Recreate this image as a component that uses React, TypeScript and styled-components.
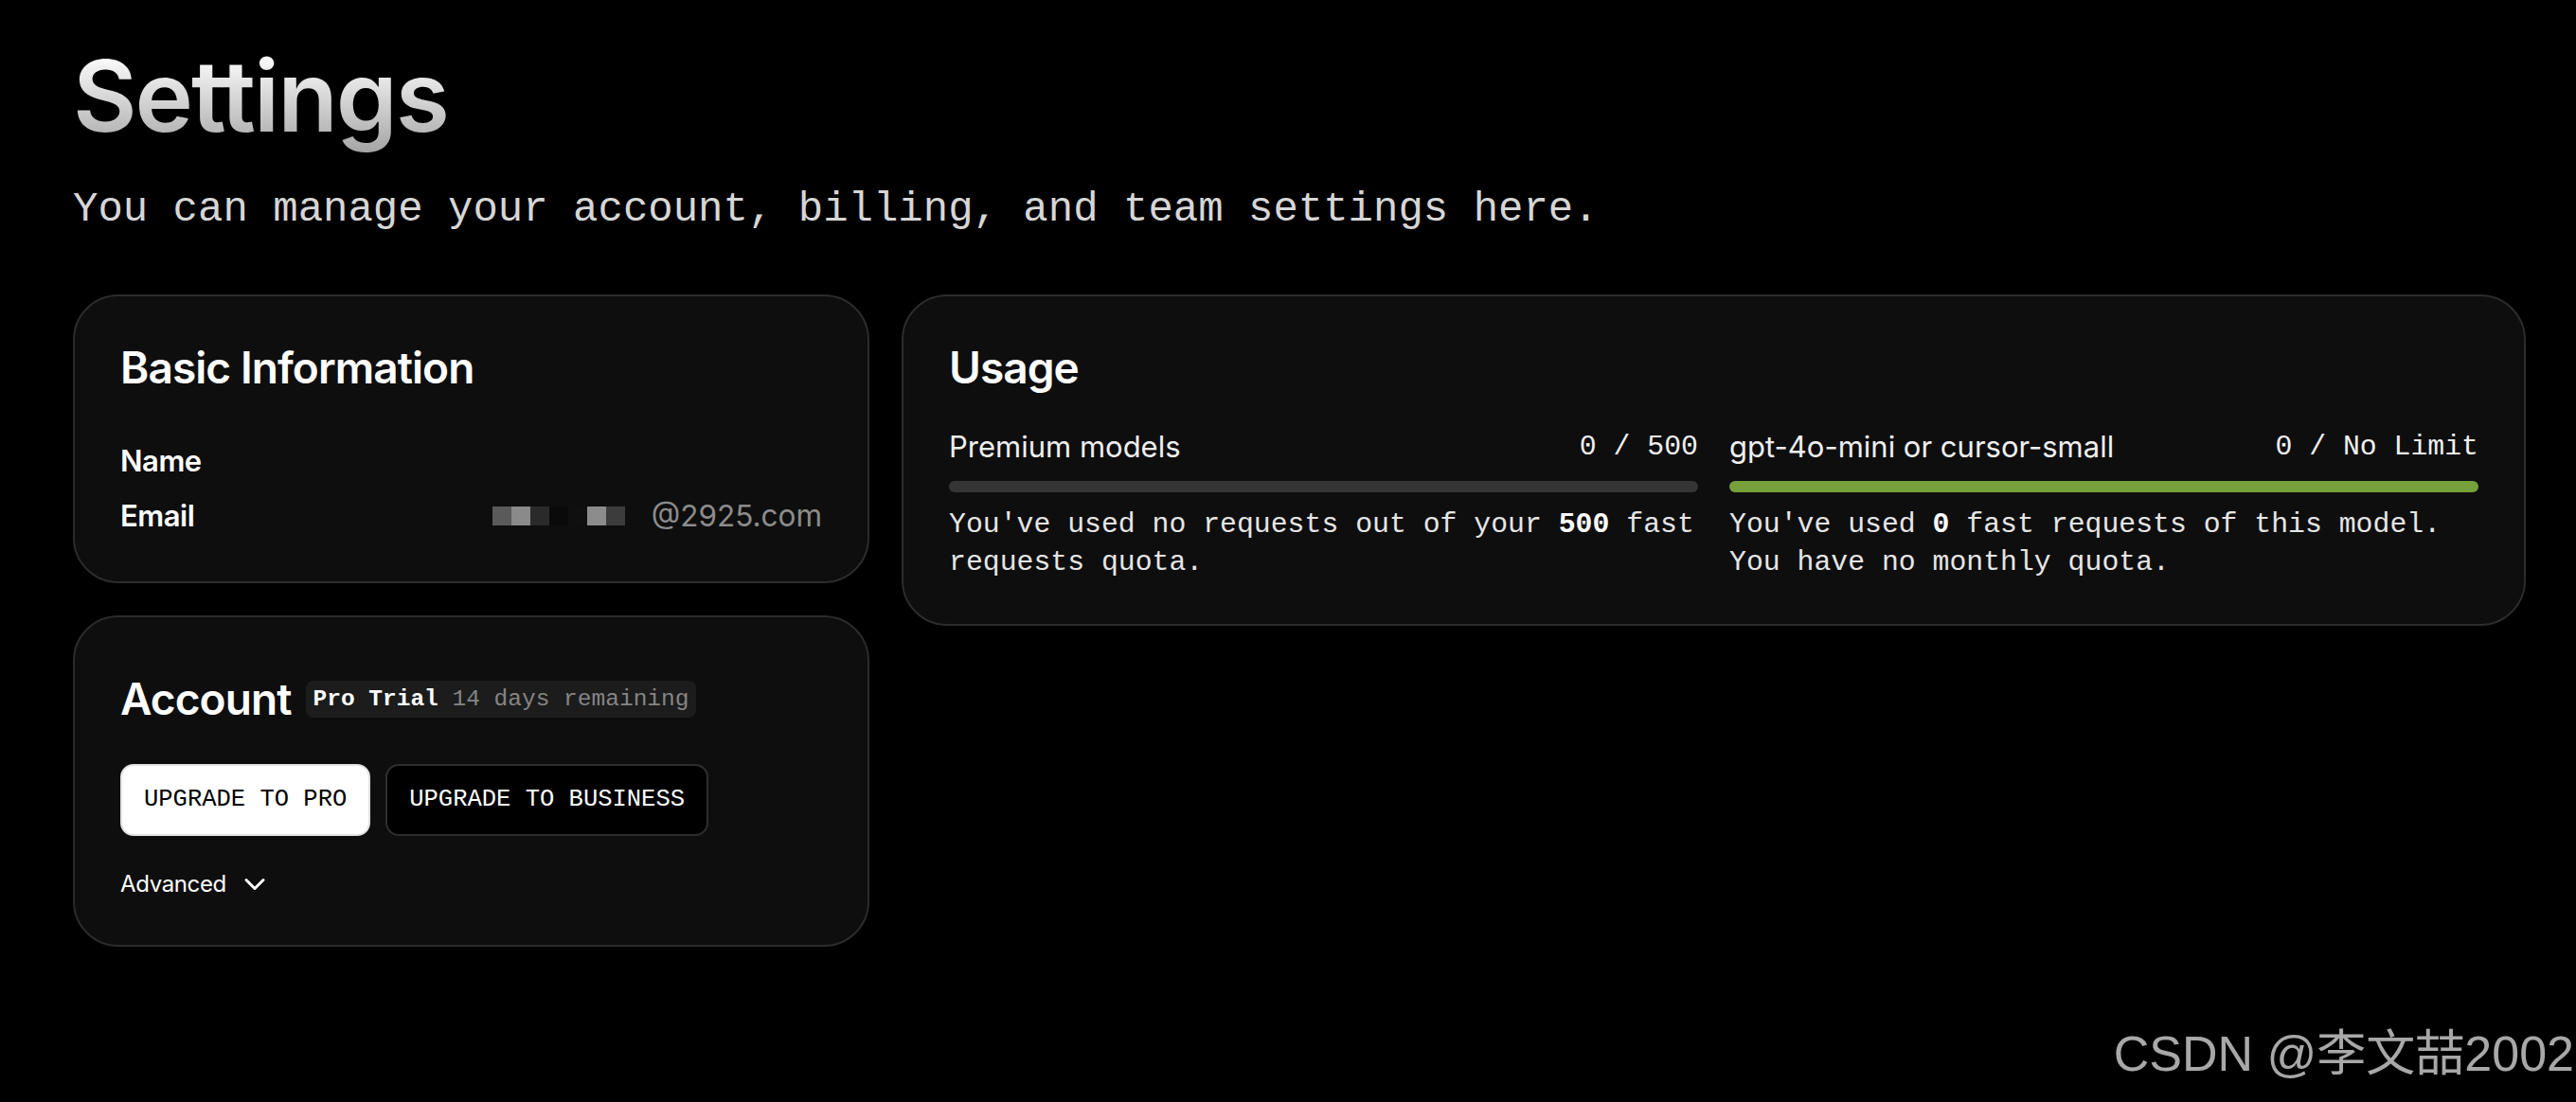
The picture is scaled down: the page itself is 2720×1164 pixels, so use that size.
import styled, { createGlobalStyle } from "styled-components";
import { ChevronDown } from "lucide-react";

const GlobalStyle = createGlobalStyle`
  html, body {
    margin: 0;
    padding: 0;
    background: #000;
  }
  * {
    box-sizing: border-box;
  }
`;

const sans = `Inter, "Noto Sans", "Liberation Sans", sans-serif`;
const mono = `"Liberation Mono", "DejaVu Sans Mono", monospace`;

const usage = [
  {
    label: "Premium models",
    count: "0 / 500",
    fill: "#353535",
    text: (
      <>
        You've used no requests out of your <b>500</b> fast requests quota.
      </>
    ),
  },
  {
    label: "gpt-4o-mini or cursor-small",
    count: "0 / No Limit",
    fill: "#75a03a",
    text: (
      <>
        You've used <b>0</b> fast requests of this model. You have no monthly
        quota.
      </>
    ),
  },
];

// blurred-out part of the email address
const mosaic = ["#5a5a5a", "#8a8a8a", "#2a2a2a", "#0a0a0a", "#0f0f0f", "#8c8c8c", "#3c3c3c"];

const App = () => {
  return (
    <>
      <GlobalStyle />
      <Page>
        <Title>Settings</Title>
        <Subtitle>You can manage your account, billing, and team settings here.</Subtitle>

        <Grid>
          <Column>
            <Card>
              <CardTitle>Basic Information</CardTitle>
              <InfoList>
                <InfoRow>
                  <InfoLabel>Name</InfoLabel>
                </InfoRow>
                <InfoRow>
                  <InfoLabel>Email</InfoLabel>
                  <EmailValue>
                    <Mosaic>
                      {mosaic.map((c, i) => (
                        <Pixel key={i} $color={c} />
                      ))}
                    </Mosaic>
                    @2925.com
                  </EmailValue>
                </InfoRow>
              </InfoList>
            </Card>

            <Card>
              <AccountHeader>
                <CardTitle>Account</CardTitle>
                <Badge>
                  <strong>Pro Trial</strong>
                  <span>14 days remaining</span>
                </Badge>
              </AccountHeader>
              <ButtonRow>
                <UpgradeButton $primary>UPGRADE TO PRO</UpgradeButton>
                <UpgradeButton>UPGRADE TO BUSINESS</UpgradeButton>
              </ButtonRow>
              <AdvancedToggle>
                Advanced
                <ChevronDown size={36} strokeWidth={2} />
              </AdvancedToggle>
            </Card>
          </Column>

          <Column>
            <UsageCard>
              <CardTitle>Usage</CardTitle>
              <UsageGrid>
                {usage.map((u) => (
                  <UsageItem key={u.label}>
                    <UsageHead>
                      <UsageLabel>{u.label}</UsageLabel>
                      <UsageCount>{u.count}</UsageCount>
                    </UsageHead>
                    <Bar $color={u.fill} />
                    <UsageText>{u.text}</UsageText>
                  </UsageItem>
                ))}
              </UsageGrid>
            </UsageCard>
          </Column>
        </Grid>

        <Watermark>CSDN @李文喆2002</Watermark>
      </Page>
    </>
  );
};

export default App;

const Page = styled.div`
  position: relative;
  min-height: 100vh;
  padding: 36px 53px 0 77px;
  background: #000;
  color: #fff;
  font-family: ${sans};
`;

const Title = styled.h1`
  margin: 0;
  display: inline-block;
  font-size: 104px;
  line-height: 1.25;
  font-weight: 600;
  letter-spacing: -0.02em;
  background: linear-gradient(180deg, #ffffff 15%, #a6a6a6 95%);
  -webkit-background-clip: text;
  background-clip: text;
  color: transparent;
`;

const Subtitle = styled.p`
  margin: 29px 0 0;
  font-family: ${mono};
  font-size: 44px;
  line-height: 1.2;
  color: #d6d6d6;
`;

const Grid = styled.div`
  display: grid;
  grid-template-columns: 841px 1715px;
  gap: 34px;
  margin-top: 63px;
  align-items: start;
`;

const Column = styled.div`
  display: flex;
  flex-direction: column;
  gap: 34px;
`;

const Card = styled.section`
  background: #0e0e0e;
  border: 2px solid #2c2c2c;
  border-radius: 48px;
  padding: 48px;
`;

const UsageCard = styled(Card)`
  padding-bottom: 45px;
`;

const CardTitle = styled.h2`
  margin: 0;
  font-size: 46px;
  line-height: 1.2;
  font-weight: 600;
  letter-spacing: -0.02em;
  color: #fff;
`;

const InfoList = styled.div`
  display: flex;
  flex-direction: column;
  gap: 16px;
  margin-top: 50px;
`;

const InfoRow = styled.div`
  display: flex;
  align-items: center;
  justify-content: space-between;
  height: 42px;
`;

const InfoLabel = styled.span`
  font-size: 31px;
  font-weight: 600;
  letter-spacing: -0.015em;
`;

const EmailValue = styled.span`
  display: flex;
  align-items: center;
  gap: 28px;
  font-size: 31.5px;
  color: #8c8c8c;
`;

const Mosaic = styled.span`
  display: flex;
`;

const Pixel = styled.span<{ $color: string }>`
  width: 20px;
  height: 20px;
  background: ${(p) => p.$color};
`;

const AccountHeader = styled.div`
  display: flex;
  align-items: center;
  gap: 16px;
  height: 77px;
`;

const Badge = styled.span`
  display: inline-flex;
  align-items: center;
  gap: 14.7px;
  height: 39px;
  padding: 0 8px 0 7px;
  border-radius: 8px;
  background: #1c1c1c;
  font-family: ${mono};
  font-size: 24.5px;
  white-space: pre;

  strong {
    color: #fff;
    font-weight: 700;
  }

  span {
    color: #858585;
  }
`;

const ButtonRow = styled.div`
  display: flex;
  gap: 16px;
  margin-top: 30px;
`;

const UpgradeButton = styled.button<{ $primary?: boolean }>`
  height: 76px;
  padding: 0 23px;
  border-radius: 14px;
  border: 2px solid ${(p) => (p.$primary ? "#e2e2e2" : "#2e2e2e")};
  background: ${(p) => (p.$primary ? "#fff" : "#000")};
  color: ${(p) => (p.$primary ? "#000" : "#fff")};
  font-family: ${mono};
  font-size: 25.5px;
  cursor: pointer;
`;

const AdvancedToggle = styled.div`
  display: flex;
  align-items: center;
  gap: 12px;
  margin-top: 35px;
  height: 32px;
  font-size: 24px;
  letter-spacing: -0.015em;
  color: #fff;
  cursor: pointer;
`;

const UsageGrid = styled.div`
  display: grid;
  grid-template-columns: 1fr 1fr;
  gap: 33px;
  margin-top: 35px;
`;

const UsageItem = styled.div`
  display: flex;
  flex-direction: column;
`;

const UsageHead = styled.div`
  display: flex;
  align-items: center;
  justify-content: space-between;
  height: 42px;
`;

const UsageLabel = styled.span`
  font-size: 31px;
  letter-spacing: 0;
  color: #f0f0f0;
`;

const UsageCount = styled.span`
  font-family: ${mono};
  font-size: 29.8px;
  color: #f0f0f0;
`;

const Bar = styled.div<{ $color: string }>`
  height: 12px;
  margin-top: 15px;
  border-radius: 6px;
  background: ${(p) => p.$color};
`;

const UsageText = styled.p`
  margin: 14px 0 0;
  font-family: ${mono};
  font-size: 29.8px;
  line-height: 40px;
  color: #e6e6e6;

  b {
    color: #fff;
    font-weight: 700;
  }
`;

const Watermark = styled.div`
  position: absolute;
  right: 2px;
  bottom: 18px;
  font-family: "Liberation Sans", "Noto Sans CJK SC", sans-serif;
  font-size: 52px;
  color: rgba(255, 255, 255, 0.66);
  pointer-events: none;
`;
